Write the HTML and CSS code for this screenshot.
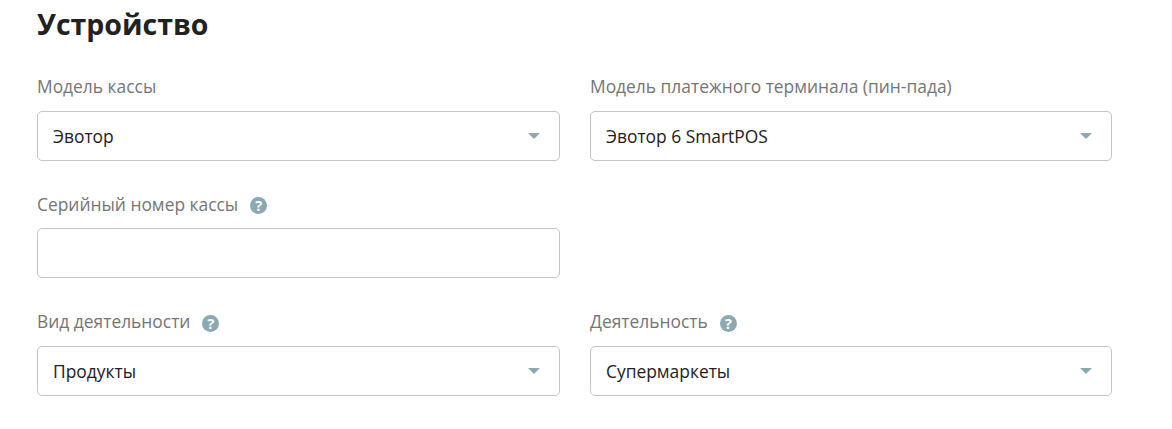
FILE: index.html
```html
<!DOCTYPE html>
<html lang="ru">
<head>
<meta charset="utf-8">
<title>Устройство</title>
<link rel="stylesheet" href="styles.css">
</head>
<body>
<main class="page">
  <h1 class="title">Устройство</h1>
  <div class="grid">
    <div class="field">
      <div class="label">Модель кассы</div>
      <div class="control"><span>Эвотор</span><i class="caret"></i></div>
    </div>
    <div class="field">
      <div class="label">Модель платежного терминала (пин-пада)</div>
      <div class="control"><span>Эвотор 6 SmartPOS</span><i class="caret"></i></div>
    </div>
    <div class="field">
      <div class="label">Серийный номер кассы<span class="help">?</span></div>
      <div class="control"></div>
    </div>
    <div class="field"></div>
    <div class="field">
      <div class="label">Вид деятельности<span class="help">?</span></div>
      <div class="control"><span>Продукты</span><i class="caret"></i></div>
    </div>
    <div class="field">
      <div class="label">Деятельность<span class="help">?</span></div>
      <div class="control"><span>Супермаркеты</span><i class="caret"></i></div>
    </div>
  </div>
</main>
</body>
</html>
```
FILE: styles.css
```css
* { box-sizing: border-box; }
html, body { margin: 0; padding: 0; background: #fff; }
body { font-family: "Open Sans", "Noto Sans", sans-serif; height: 429px; overflow: hidden; }
.page { padding: 0 60px 0 37px; }
.title {
  margin: 0;
  height: 48px;
  font-size: 28.5px;
  line-height: 48px;
  font-weight: 700;
  color: #212121;
}
.grid {
  display: grid;
  grid-template-columns: 523px 522px;
  column-gap: 30px;
  row-gap: 30px;
  padding-top: 24.9px;
}
.field { min-height: 87.75px; }
.label {
  display: flex;
  align-items: center;
  height: 26px;
  margin-bottom: 11.75px;
  font-size: 17.4px;
  line-height: 26px;
  color: #757575;
}
.control {
  display: flex;
  align-items: center;
  justify-content: space-between;
  height: 50px;
  padding: 0 19px 0 15px;
  border: 1px solid #c4c4c4;
  border-radius: 5px;
  font-size: 17.4px;
  color: #212121;
}
.caret {
  width: 0;
  height: 0;
  border-left: 6px solid transparent;
  border-right: 6px solid transparent;
  border-top: 6px solid #8aa9b3;
}
.help {
  display: inline-flex;
  align-items: center;
  justify-content: center;
  width: 17px;
  height: 17px;
  margin: 4px 0 0 12px;
  border-radius: 50%;
  background: #8aa9b3;
  color: #fff;
  font-size: 15px;
  font-weight: 700;
  line-height: 17px;
}
```
